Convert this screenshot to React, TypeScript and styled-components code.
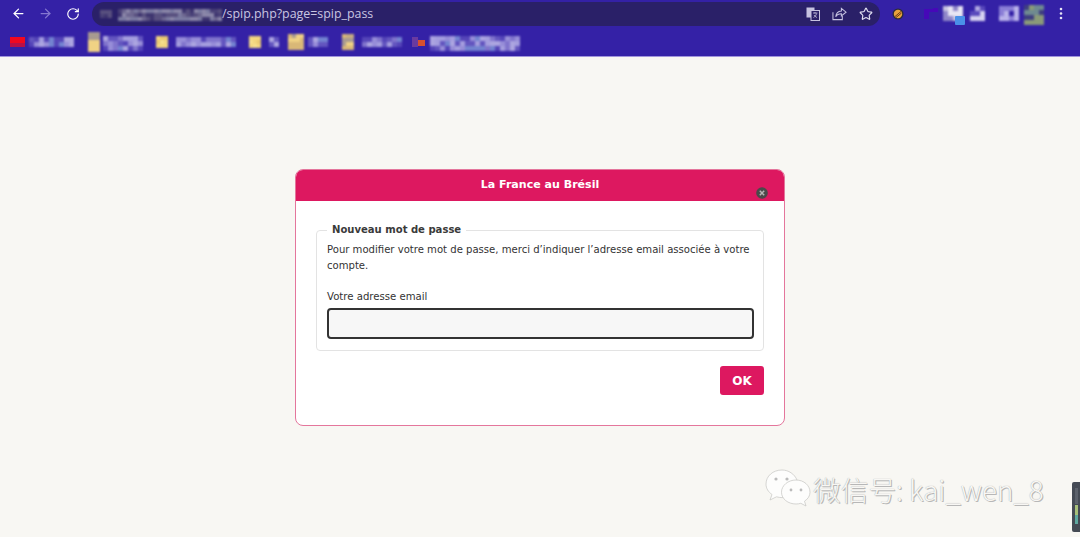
import React from 'react';
import styled, { createGlobalStyle } from 'styled-components';
import { ArrowLeft, ArrowRight, RotateCw, Star } from 'lucide-react';

const Global = createGlobalStyle`
  html, body { margin: 0; padding: 0; height: 100%; background: #f8f7f3; overflow: hidden; }
  #root { height: 100%; }
`;

const Page = styled.div`
  position: relative;
  width: 1080px;
  height: 537px;
  display: flex;
  flex-direction: column;
  font-family: "DejaVu Sans", Verdana, sans-serif;
`;
const Chrome = styled.header`
  background: #3421a6;
  height: 57px;
  box-sizing: border-box;
  border-bottom: 1px solid #a094dc;
  display: flex;
  flex-direction: column;
`;
const Toolbar = styled.div`
  height: 27px;
  display: flex;
  align-items: center;
  padding: 0 5px;
  box-sizing: border-box;
`;
const NavButton = styled.span<{ $dim?: boolean }>`
  width: 27px;
  height: 27px;
  display: flex;
  align-items: center;
  justify-content: center;
  color: ${p => (p.$dim ? '#8577d0' : '#ffffff')};
  svg { display: block; }
`;
const Omnibox = styled.div`
  margin-left: 6px;
  width: 788px;
  height: 24px;
  border-radius: 12px;
  background: #2a2068;
  display: flex;
  align-items: center;
  padding-left: 8px;
  box-sizing: border-box;
`;
const UrlHost = styled.span`
  display: flex;
  align-items: center;
  gap: 8px;
`;
const Url = styled.span`
  font: 12.4px "Open Sans", "Noto Sans", sans-serif;
  color: #c9c5e2;
`;
const OmniActions = styled.div`
  margin-left: auto;
  margin-right: 7px;
  display: flex;
  align-items: center;
  gap: 12px;
  color: #c6c2e0;
  svg { display: block; }
`;
const Extensions = styled.div`
  flex: 1;
  display: flex;
  align-items: center;
  padding-left: 12px;
`;
const ExtensionSlot = styled.span<{ $left: number }>`
  position: relative;
  display: flex;
  margin-left: ${p => p.$left}px;
`;
const ProfileBadge = styled.svg`
  position: absolute;
  left: 12px;
  top: 10px;
`;
const Bookmarks = styled.nav`
  flex: 1;
  display: flex;
  align-items: center;
  padding-left: 10px;
`;
const Bookmark = styled.span<{ $gap: number; $after: number }>`
  display: flex;
  align-items: center;
  gap: ${p => p.$gap}px;
  margin-right: ${p => p.$after}px;
  svg { display: block; }
`;
const Main = styled.main`
  flex: 1;
  padding-top: 112px;
  display: flex;
  justify-content: center;
  align-items: flex-start;
`;
const Modal = styled.section`
  position: relative;
  width: 490px;
  height: 257px;
  box-sizing: border-box;
  background: #fff;
  border: 1px solid #e4769c;
  border-radius: 8px;
  overflow: hidden;
`;
const ModalHeader = styled.h1`
  margin: -1px -1px 0;
  height: 32px;
  background: #dd1860;
  color: #fff;
  font-size: 11.05px;
  font-weight: 700;
  line-height: 31px;
  text-align: center;
`;
const CloseIcon = styled.svg`
  position: absolute;
  right: 16px;
  top: 17px;
`;
const Body = styled.div`
  padding: 22px 20px 0 20px;
`;
const Fieldset = styled.fieldset`
  margin: 0;
  padding: 0 8px 0 10px;
  height: 128px;
  box-sizing: border-box;
  border: 1px solid #e3e3e3;
  border-radius: 4px;
  min-width: 0;
`;
const Legend = styled.legend`
  margin-left: 0;
  padding: 0 5px;
  font-size: 10.05px;
  font-weight: 700;
  line-height: 14px;
  color: #3a3a3a;
`;
const Intro = styled.p`
  margin: 5px 0 0;
  font-size: 10.08px;
  line-height: 16px;
  color: #333;
`;
const Label = styled.label`
  display: block;
  margin-top: 15px;
  font-size: 10.15px;
  line-height: 16px;
  color: #333;
`;
const Input = styled.input`
  display: block;
  margin-top: 3px;
  width: 427px;
  height: 31px;
  box-sizing: border-box;
  background: #f7f7f7;
  border: 2px solid #333;
  border-radius: 4px;
  outline: none;
`;
const Actions = styled.div`
  display: flex;
  justify-content: flex-end;
  margin-top: 15px;
`;
const OkButton = styled.button`
  width: 44px;
  height: 29px;
  background: #dd1860;
  border: 0;
  border-radius: 3px;
  color: #fff;
  font-family: inherit;
  font-size: 12px;
  font-weight: 700;
  padding: 0;
`;
const Watermark = styled.div`
  position: absolute;
  left: 764px;
  top: 465px;
  display: flex;
  align-items: center;
  gap: 1px;
`;
const WatermarkText = styled.span`
  margin-top: 4px;
  font: 300 27.7px "Noto Sans CJK SC", "Liberation Sans", sans-serif;
  color: #f8f7f4;
  text-shadow: 0 0 1px #999, 1px 1px 0 #bbb;
  white-space: nowrap;
`;
const Meter = styled.svg`
  position: absolute;
  left: 1072px;
  top: 482px;
`;

function Mosaic({ w, h, cell = 5, seed = 1, colors }: { w: number; h: number; cell?: number; seed?: number; colors: string[] }) {
  const rects: React.ReactNode[] = [];
  let s = seed * 7919;
  for (let y = 0; y < h; y += cell) {
    for (let x = 0; x < w; x += cell) {
      s = (s * 1103515245 + 12345) & 0x7fffffff;
      const c = colors[(s >> 8) % colors.length];
      rects.push(<rect key={x + '-' + y} x={x} y={y} width={cell} height={cell} fill={c} />);
    }
  }
  return <svg width={w} height={h} style={{ filter: 'blur(1px)', overflow: 'visible' }}>{rects}</svg>;
}

const textColors = ['#8074cc', '#978dd8', '#6355bf', '#aca5e0', '#7383d0', '#a49dde', '#5545b8'];
const urlColors = ['#6d6690', '#58507f', '#8a86a8', '#3f3670', '#7a7aa0', '#4a4278'];
const folder = ['#f3d67e', '#e9c870', '#f6e08e'];
const tan = ['#d9b877', '#f0d284', '#a89a90', '#c8ae80'];

export default function App() {
  return (
    <Page>
      <Global />
      <Chrome>
        <Toolbar>
          <NavButton><ArrowLeft size={15} strokeWidth={2} /></NavButton>
          <NavButton $dim><ArrowRight size={15} strokeWidth={2} /></NavButton>
          <NavButton><RotateCw size={14} strokeWidth={2} /></NavButton>
          <Omnibox>
            <UrlHost>
              <Mosaic w={10} h={8} cell={4} seed={21} colors={urlColors} />
              <Mosaic w={104} h={9} cell={4} seed={3} colors={urlColors} />
            </UrlHost>
            <Url>/spip.php?page=spip_pass</Url>
            <OmniActions>
              <svg width="14" height="14" viewBox="0 0 14 14" fill="none" stroke="currentColor" strokeWidth="1">
                <rect x="0.5" y="0.5" width="8" height="10" fill="#c6c2e0" stroke="none" />
                <rect x="5" y="3.5" width="8.5" height="10" fill="#2a2068" />
                <path d="M7 6h4.500M9 5v1.500M10.500 6.500c-.4 2-1.600 3.500-3 4M8 8c.6 1 1.600 2 3 2.500" strokeWidth="0.8" />
              </svg>
              <svg width="15" height="14" viewBox="0 0 16 14" fill="none" stroke="currentColor" strokeWidth="1.1">
                <path d="M1 5v8h10V9" />
                <path d="M10 1l5 4-5 4V6.800C7 6.800 5.200 7.800 4 10c.3-3.400 2.400-6 6-6.300z" />
              </svg>
              <Star size={14} strokeWidth={2} color="#e0def0" />
            </OmniActions>
          </Omnibox>
          <Extensions>
            <svg width="12" height="12" viewBox="0 0 12 12">
              <circle cx="6" cy="6" r="5.500" fill="#2b2b3a" />
              <circle cx="6" cy="6" r="4.200" fill="#e8a33c" />
              <path d="M3 8.500L9 3.500M4 9.500L9.500 5" stroke="#6b3b12" strokeWidth="1" />
            </svg>
            <ExtensionSlot $left={19}>
              <svg width="18" height="13" viewBox="0 0 18 13" style={{ filter: 'blur(0.6px)' }}>
                <path d="M1 2h9V1h5v4H6v7H1z" fill="#4608b8" />
              </svg>
            </ExtensionSlot>
            <ExtensionSlot $left={2}>
              <Mosaic w={16} h={15} cell={5} seed={5} colors={['#e8e6f4', '#c6c3e0', '#8f86c8', '#ffffff']} />
              <ProfileBadge width="10" height="9"><rect width="10" height="9" rx="1" fill="#4a90e8" /></ProfileBadge>
            </ExtensionSlot>
            <ExtensionSlot $left={11}>
              <Mosaic w={15} h={15} cell={5} seed={11} colors={['#b0a8e2', '#d6d2f0', '#5a4abc', '#3421a6']} />
            </ExtensionSlot>
            <ExtensionSlot $left={14}>
              <Mosaic w={20} h={15} cell={5} seed={8} colors={['#b9b2ea', '#8a7ed6', '#3421a6']} />
            </ExtensionSlot>
            <ExtensionSlot $left={5}>
              <Mosaic w={20} h={18} cell={5} seed={4} colors={['#6f8a90', '#5a6a8a', '#8a9a78', '#3f3f80']} />
            </ExtensionSlot>
            <ExtensionSlot $left={15}>
              <svg width="4" height="13" viewBox="0 0 4 13">
                <circle cx="2" cy="2" r="1.300" fill="#e6e4f4" />
                <circle cx="2" cy="6.500" r="1.300" fill="#e6e4f4" />
                <circle cx="2" cy="11" r="1.300" fill="#e6e4f4" />
              </svg>
            </ExtensionSlot>
          </Extensions>
        </Toolbar>
        <Bookmarks>
          <Bookmark $gap={4} $after={15}>
            <svg width="15" height="10"><rect width="15" height="6" fill="#f00820" /><rect y="6" width="15" height="4" fill="#b81048" /></svg>
            <Mosaic w={44} h={10} seed={2} colors={textColors} />
          </Bookmark>
          <Bookmark $gap={6} $after={15}>
            <Mosaic w={9} h={19} cell={4} seed={6} colors={tan} />
            <Mosaic w={38} h={12} seed={7} colors={textColors} />
          </Bookmark>
          <Bookmark $gap={10} $after={15}>
            <Mosaic w={10} h={11} cell={4} seed={9} colors={folder} />
            <Mosaic w={58} h={10} seed={10} colors={textColors} />
          </Bookmark>
          <Bookmark $gap={9} $after={10}>
            <Mosaic w={11} h={11} cell={4} seed={12} colors={folder} />
            <Mosaic w={9} h={10} seed={13} colors={textColors} />
          </Bookmark>
          <Bookmark $gap={6} $after={15}>
            <Mosaic w={14} h={15} cell={4} seed={14} colors={tan} />
            <Mosaic w={19} h={10} seed={15} colors={textColors} />
          </Bookmark>
          <Bookmark $gap={10} $after={12}>
            <Mosaic w={10} h={16} cell={4} seed={16} colors={tan} />
            <Mosaic w={38} h={10} seed={17} colors={textColors} />
          </Bookmark>
          <Bookmark $gap={5} $after={0}>
            <svg width="13" height="10"><rect width="6" height="10" fill="#6a3aa0" /><rect x="6" y="3" width="7" height="6" fill="#d8502e" /></svg>
            <Mosaic w={88} h={12} seed={18} colors={textColors} />
          </Bookmark>
        </Bookmarks>
      </Chrome>
      <Main>
        <Modal>
          <ModalHeader>La France au Brésil</ModalHeader>
          <CloseIcon width="12" height="12" viewBox="0 0 12 12">
            <circle cx="6" cy="6" r="5.800" fill="#4a4a4a" />
            <path d="M3.800 3.800l4.400 4.400M8.200 3.800l-4.400 4.400" stroke="#b5b5b5" strokeWidth="1.500" />
          </CloseIcon>
          <Body>
            <Fieldset>
              <Legend>Nouveau mot de passe</Legend>
              <Intro>Pour modifier votre mot de passe, merci d’indiquer l’adresse email associée à votre compte.</Intro>
              <Label htmlFor="email">Votre adresse email</Label>
              <Input id="email" type="text" />
            </Fieldset>
            <Actions><OkButton>OK</OkButton></Actions>
          </Body>
        </Modal>
      </Main>
      <Watermark>
        <svg width="48" height="40" viewBox="0 0 48 40">
          <g fill="#fdfdfc" stroke="#c4c4c2" strokeWidth="0.7">
            <path d="M18 3C9 3 2 9 2 17c0 4.500 2.400 8 6 10.500L6 33l6.500-3.200c2 .5 3.800.8 5.500.8 1 0 1.500 0 2.500-.2C30 24 32 16 33 13 30.500 7 24.500 3 18 3z" />
            <path d="M32 13c-8 0-14.500 5.500-14.500 12.200S24 37 32 37c1.800 0 3.200-.2 4.800-.7L42 39l-1.500-4.800c3.500-2.300 5.500-5.400 5.500-9C46 18.500 40 13 32 13z" />
          </g>
          <g fill="#bbb">
            <circle cx="12" cy="12" r="1.600" /><circle cx="23" cy="12" r="1.600" />
            <circle cx="27" cy="23" r="1.400" /><circle cx="37" cy="23" r="1.400" />
          </g>
        </svg>
        <WatermarkText>微信号: kai_wen_8</WatermarkText>
      </Watermark>
      <Meter width="8" height="50" viewBox="0 0 8 50">
        <rect width="10" height="50" rx="2" fill="#454b55" />
        <rect x="3" y="6" width="3" height="16" fill="#5c626c" />
        <rect x="3" y="23" width="3" height="10" fill="#a7c07a" />
        <rect x="3" y="33" width="3" height="9" fill="#5fa9a0" />
      </Meter>
    </Page>
  );
}
